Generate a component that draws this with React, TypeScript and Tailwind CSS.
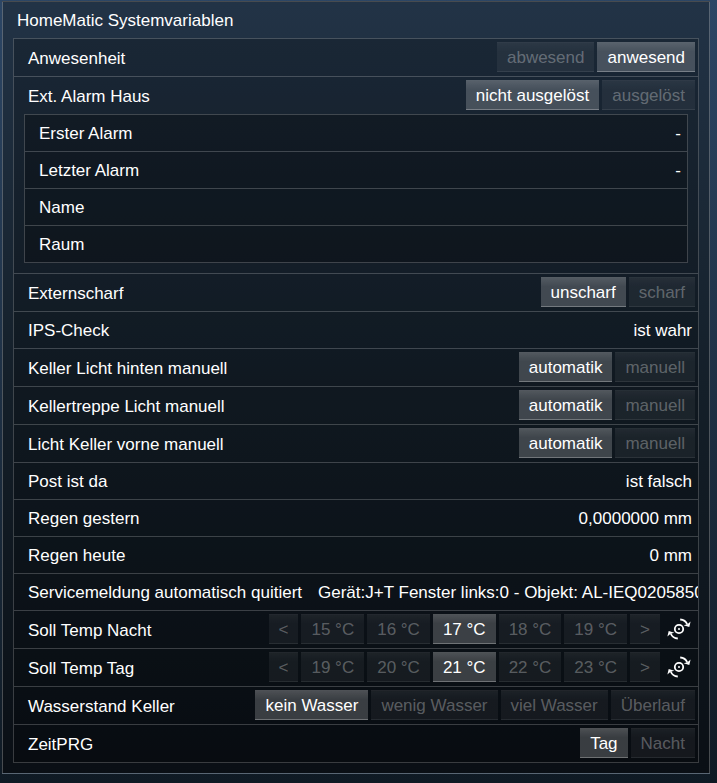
import type { ReactNode } from "react";

type Choice = { options: string[]; active: string };

function Options({ label, options, active }: Choice & { label: string }) {
  return (
    <div role="group" aria-label={label} className="flex gap-[3px]">
      {options.map((o) => (
        <button
          key={o}
          type="button"
          aria-pressed={o === active}
          className={
            "h-[30px] whitespace-nowrap border-y px-2.5 pt-0.5 leading-5 " +
            (o === active
              ? "border-t-white/10 border-b-white/20 bg-[linear-gradient(to_bottom,rgba(255,255,255,0.27),rgba(255,255,255,0.2)_30%,rgba(255,255,255,0.2))] text-white"
              : "border-t-white/5 border-b-white/5 bg-[linear-gradient(to_bottom,rgba(255,255,255,0.08),rgba(255,255,255,0.05)_30%,rgba(255,255,255,0.05))] text-white/30")
          }
        >
          {o}
        </button>
      ))}
    </div>
  );
}

function ControlLine({ label, children }: { label: string; children: ReactNode }) {
  return (
    <div className="flex h-[37px] items-start justify-between pt-[3px] pr-[3px] pl-3.5">
      <span className="leading-[34px]">{label}</span>
      {children}
    </div>
  );
}

function ButtonRow({ label, children }: { label: string; children: ReactNode }) {
  return (
    <div className="border-b border-white/20 last:border-b-0">
      <ControlLine label={label}>{children}</ControlLine>
    </div>
  );
}

function ValueRow({ label, value }: { label: string; value?: string }) {
  return (
    <div className="flex h-[37px] justify-between gap-4 overflow-hidden border-b border-white/20 pr-1.5 pl-3.5 leading-[38px] whitespace-nowrap last:h-9 last:border-b-0">
      <span>{label}</span>
      <span>{value}</span>
    </div>
  );
}

function RotateIcon() {
  return (
    <svg viewBox="0 0 24 24" className="h-6 w-6" fill="none" stroke="white" strokeWidth="1.8" aria-hidden="true">
      <circle cx="12" cy="12" r="4.2" />
      <circle cx="12" cy="12" r="1" fill="white" stroke="none" />
      <path d="M13.200 2.500C16.500 2.600 19 4.300 20.300 7.500" />
      <path d="M23.600 4.500 22.300 10 16.600 8.200 20.500 7.200z" fill="white" stroke="none" />
      <path d="M10.800 21.500C7.500 21.400 5 19.700 3.700 16.500" />
      <path d="M.4 19.500 1.700 14 7.400 15.800 3.500 16.800z" fill="white" stroke="none" />
    </svg>
  );
}

function TempRow({ label, options, active }: Choice & { label: string }) {
  return (
    <ButtonRow label={label}>
      <div className="flex items-center gap-[7px] pr-1">
        <Options label={label} options={["<", ...options, ">"]} active={active} />
        <button type="button" aria-label={label + " drehen"}>
          <RotateIcon />
        </button>
      </div>
    </ButtonRow>
  );
}

function Toggle({ label, options, active }: Choice & { label: string }) {
  return (
    <ButtonRow label={label}>
      <Options label={label} options={options} active={active} />
    </ButtonRow>
  );
}

export default function App() {
  return (
    <main className="min-h-screen bg-[linear-gradient(to_bottom,#2c4665,#1e3044_50%,#0f1a24)] pt-px pr-[7px] pb-[9px] pl-0.5 font-['Liberation_Sans',Arial,sans-serif] text-[17px] text-white">
      <section className="border border-white/25 bg-[linear-gradient(to_bottom,#223346,#141f29_50%,#0a0f15)] px-2.5 pb-2.5">
        <h1 className="h-9 pl-1 leading-[38px]">HomeMatic Systemvariablen</h1>
        <div className="border border-white/20 bg-black/20">
          <Toggle label="Anwesenheit" options={["abwesend", "anwesend"]} active="anwesend" />
          <div className="border-b border-white/20 pb-2.5">
            <ControlLine label="Ext. Alarm Haus">
              <Options label="Ext. Alarm Haus" options={["nicht ausgelöst", "ausgelöst"]} active="nicht ausgelöst" />
            </ControlLine>
            <div className="mx-2.5 border border-white/20 bg-black/25">
              <ValueRow label="Erster Alarm" value="-" />
              <ValueRow label="Letzter Alarm" value="-" />
              <ValueRow label="Name" />
              <ValueRow label="Raum" />
            </div>
          </div>
          <Toggle label="Externscharf" options={["unscharf", "scharf"]} active="unscharf" />
          <ValueRow label="IPS-Check" value="ist wahr" />
          <Toggle label="Keller Licht hinten manuell" options={["automatik", "manuell"]} active="automatik" />
          <Toggle label="Kellertreppe Licht manuell" options={["automatik", "manuell"]} active="automatik" />
          <Toggle label="Licht Keller vorne manuell" options={["automatik", "manuell"]} active="automatik" />
          <ValueRow label="Post ist da" value="ist falsch" />
          <ValueRow label="Regen gestern" value="0,0000000 mm" />
          <ValueRow label="Regen heute" value="0 mm" />
          <ValueRow label="Servicemeldung automatisch quitiert" value="Gerät:J+T Fenster links:0 - Objekt: AL-IEQ0205850" />
          <TempRow label="Soll Temp Nacht" options={["15 °C", "16 °C", "17 °C", "18 °C", "19 °C"]} active="17 °C" />
          <TempRow label="Soll Temp Tag" options={["19 °C", "20 °C", "21 °C", "22 °C", "23 °C"]} active="21 °C" />
          <Toggle label="Wasserstand Keller" options={["kein Wasser", "wenig Wasser", "viel Wasser", "Überlauf"]} active="kein Wasser" />
          <Toggle label="ZeitPRG" options={["Tag", "Nacht"]} active="Tag" />
        </div>
      </section>
    </main>
  );
}
